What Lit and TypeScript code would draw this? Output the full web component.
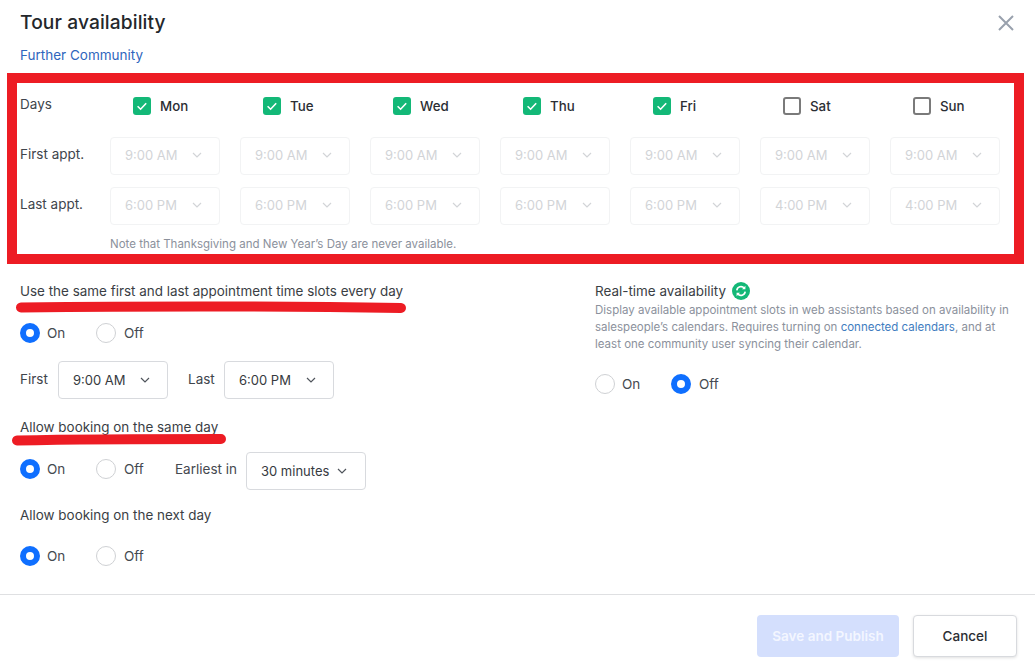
import { LitElement, html, css, svg } from "lit";
import { customElement } from "lit/decorators.js";

const chevron = html`<svg class="chev" width="10" height="6" viewBox="0 0 10 6"><path d="M1 1l4 4 4-4" fill="none" stroke="currentColor" stroke-width="1.2"/></svg>`;
const check = svg`<path d="M4.6 9.2l3 3 5.6-6" fill="none" stroke="#fff" stroke-width="1.6"/>`;

const days = [
  ["Mon", true, "9:00 AM", "6:00 PM"],
  ["Tue", true, "9:00 AM", "6:00 PM"],
  ["Wed", true, "9:00 AM", "6:00 PM"],
  ["Thu", true, "9:00 AM", "6:00 PM"],
  ["Fri", true, "9:00 AM", "6:00 PM"],
  ["Sat", false, "9:00 AM", "4:00 PM"],
  ["Sun", false, "9:00 AM", "4:00 PM"],
] as const;

@customElement("app-root")
export class AppRoot extends LitElement {
  static styles = css`
    :host { display: block; width: 1035px; height: 663px; position: relative; overflow: hidden; background: #fff;
      font-family: Inter, "Liberation Sans", sans-serif; font-size: 14px; color: #333840; }
    * { box-sizing: border-box; }
    .head { height: 73px; padding: 11px 20px 0; position: relative; }
    .title { font-size: 19.2px; line-height: 22px; font-weight: 500; color: #24272b; letter-spacing: 0.1px; }
    .sub { margin-top: 13px; font-size: 13.5px; line-height: 18px; color: #2f66bd; }
    .close { position: absolute; left: 998px; top: 15px; color: #99a1ad; }
    .box { margin: 0 11px 0 7px; height: 191px; border: 10px solid #ed1c24; padding: 0 0 0 3px; }
    .row { display: flex; align-items: center; }
    .row .lab { width: 90px; flex: none; font-size: 13.5px; color: #40454c; }
    .cells { display: flex; gap: 20px; }
    .days { height: 43px; }
    .days .lab { margin-top: -2px; }
    .day { width: 110px; display: flex; align-items: center; gap: 9px; padding-left: 23px; margin-top: 3px;
      font-size: 13.3px; font-weight: 500; color: #2b2e33; }
    .cb { width: 18px; height: 18px; border-radius: 3px; background: #13b877; flex: none; display: block; }
    .cb.off { background: #fff; border: 2px solid #7a7a7a; }
    .times { height: 50px; padding-top: 10px; }
    .times .lab { margin-top: -5px; }
    .sel { height: 38px; width: 110px; border: 1px solid #d8dade; border-radius: 4px; display: flex; align-items: center;
      justify-content: space-between; padding: 0 17px 0 14px; font-size: 13px; color: #363a40; background: #fff; flex: none; }
    .sel .chev { color: #50555c; }
    .sel.dis { border-color: #f2f3f4; color: #d2d4d7; padding-bottom: 2px; }
    .sel.dis .chev { color: #d2d4d7; }
    .note { margin: 10px 0 0 90px; font-size: 11.5px; line-height: 16px; color: #8b919c; }
    .cols { display: flex; height: 330px; }
    .left { width: 595px; padding: 19px 0 0 20px; flex: none; }
    .right { flex: 1; padding-top: 19px; padding-right: 20px; }
    .t { font-size: 13.45px; line-height: 16px; color: #3a3e44; }
    .radios { display: flex; align-items: center; }
    .opt { display: flex; align-items: center; gap: 7px; width: 76px; font-size: 13.5px; color: #454950; }
    .opt + .opt { gap: 8px; }
    .r { width: 20px; height: 20px; border-radius: 50%; border: 1px solid #cfd1d4; background: #fff; flex: none; }
    .r.on { border: 6.5px solid #0f6fff; }
    .r1 { margin-top: 24px; }
    .times2 { display: flex; align-items: center; margin-top: 18px; font-size: 13.5px; color: #40454c; }
    .times2 .a { width: 38px; margin-top: -3px; }
    .times2 .b { width: 36px; margin: -3px 0 0 20px; }
    .r2 { margin-top: 20px; }
    .r3 { margin-top: 17px; height: 38px; }
    .r3 .opt { margin-bottom: 4px; }
    .r3 .earliest { margin: 0 9px 4px 3px; font-size: 13.5px; color: #454950; white-space: nowrap; }
    .w120 { width: 120px; padding-right: 18px; }
    .r4 { margin-top: 17px; }
    .r5 { margin-top: 23px; }
    .rt { display: flex; align-items: center; gap: 6px; height: 16px; }
    .desc { margin-top: 3px; font-size: 11.5px; line-height: 17px; color: #8b919c; }
    .desc span { color: #3f7dc0; }
    .r6 { margin-top: 21px; }
    .foot { border-top: 1px solid #dfe0e2; height: 69px; display: flex; justify-content: flex-end; gap: 14px; padding: 20px 18px 0 0; }
    .btn { height: 42px; border-radius: 4px; display: flex; align-items: center; justify-content: center; font-size: 13.5px; font-weight: 600; }
    .save { width: 142px; background: #d4dffd; color: #f3f6ff; }
    .cancel { width: 104px; background: #fff; border: 1px solid #d8dade; color: #2b2e33; font-weight: 500; box-shadow: 0 1px 3px rgba(0,0,0,.12); }
    .ink { position: absolute; left: 0; top: 0; pointer-events: none; }
  `;

  private radios(on: boolean) {
    return html`
      <div class="opt"><span class="r ${on ? "on" : ""}"></span>On</div>
      <div class="opt"><span class="r ${on ? "" : "on"}"></span>Off</div>`;
  }

  render() {
    return html`
      <div class="head">
        <div class="title">Tour availability</div>
        <div class="sub">Further Community</div>
        <svg class="close" width="16" height="16" viewBox="0 0 16 16"><path d="M1 1l14 14M15 1L1 15" stroke="currentColor" stroke-width="2" fill="none"/></svg>
      </div>
      <div class="box">
        <div class="row days">
          <div class="lab">Days</div>
          <div class="cells">
            ${days.map(([n, c]) => html`<div class="day">
              <svg class="cb ${c ? "" : "off"}" viewBox="0 0 18 18">${c ? check : ""}</svg>${n}</div>`)}
          </div>
        </div>
        <div class="row times">
          <div class="lab">First appt.</div>
          <div class="cells">${days.map((d) => html`<div class="sel dis">${d[2]}${chevron}</div>`)}</div>
        </div>
        <div class="row times">
          <div class="lab">Last appt.</div>
          <div class="cells">${days.map((d) => html`<div class="sel dis">${d[3]}${chevron}</div>`)}</div>
        </div>
        <div class="note">Note that Thanksgiving and New Year’s Day are never available.</div>
      </div>
      <div class="cols">
        <div class="left">
          <div class="t">Use the same first and last appointment time slots every day</div>
          <div class="radios r1">${this.radios(true)}</div>
          <div class="times2">
            <span class="a">First</span><div class="sel">9:00 AM${chevron}</div>
            <span class="b">Last</span><div class="sel">6:00 PM${chevron}</div>
          </div>
          <div class="t r2">Allow booking on the same day</div>
          <div class="radios r3">${this.radios(true)}
            <span class="earliest">Earliest in</span>
            <div class="sel w120">30 minutes${chevron}</div>
          </div>
          <div class="t r4">Allow booking on the next day</div>
          <div class="radios r5">${this.radios(true)}</div>
        </div>
        <div class="right">
          <div class="t rt">Real-time availability
            <svg width="18" height="18" viewBox="0 0 18 18">
              <circle cx="9" cy="9" r="9" fill="#13b877"/>
              <path d="M4.8 8.4A4.3 4.3 0 0 1 12.2 6M13.2 9.6A4.3 4.3 0 0 1 5.8 12" fill="none" stroke="#fff" stroke-width="1.6"/>
              <path d="M13.4 3.8v3.4H10zM4.6 14.2v-3.4H8z" fill="#fff"/>
            </svg>
          </div>
          <div class="desc">Display available appointment slots in web assistants based on availability in salespeople’s calendars. Requires turning on <span>connected calendars</span>, and at least one community user syncing their calendar.</div>
          <div class="radios r6">${this.radios(false)}</div>
        </div>
      </div>
      <div class="foot">
        <div class="btn save">Save and Publish</div>
        <div class="btn cancel">Cancel</div>
      </div>
      <svg class="ink" width="1035" height="663" viewBox="0 0 1035 663">
        <path d="M21 307.5C150 306 280 306 401 308" stroke="#ed1c24" stroke-width="10" stroke-linecap="round" fill="none"/>
        <path d="M17 440.5C90 439 160 439 221 439" stroke="#ed1c24" stroke-width="10" stroke-linecap="round" fill="none"/>
      </svg>
    `;
  }
}
